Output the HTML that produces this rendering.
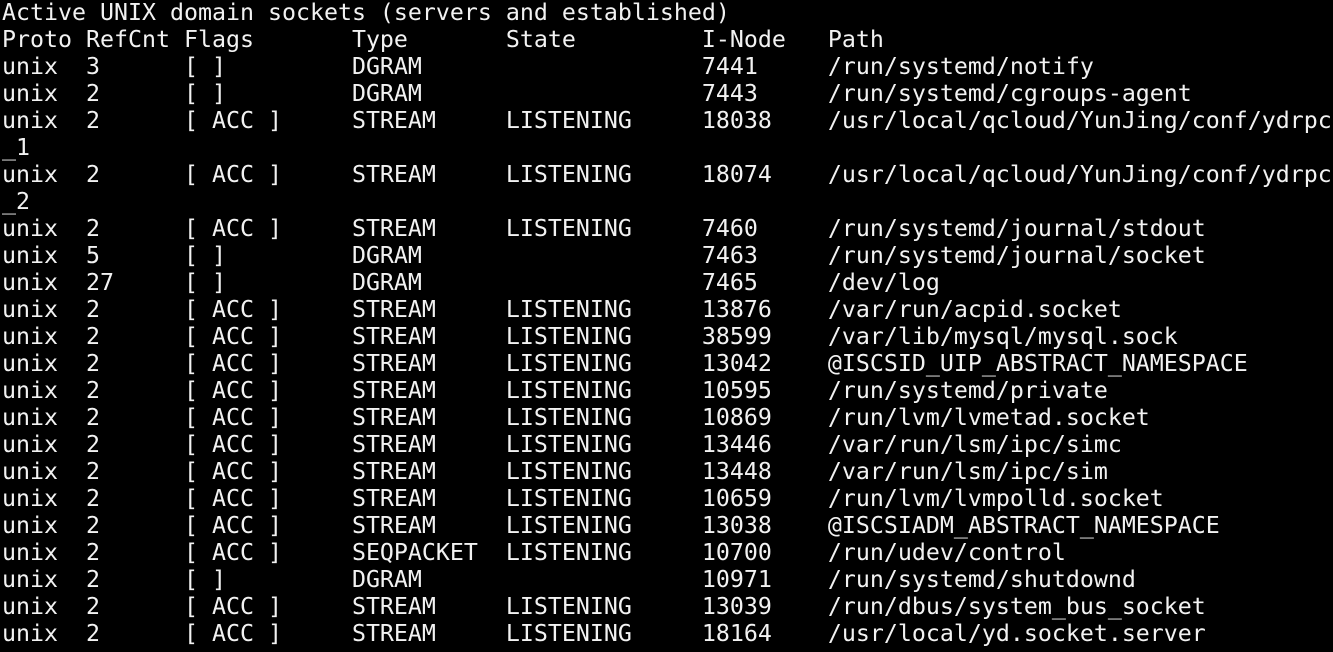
<!DOCTYPE html>
<html><head><meta charset="utf-8"><style>
html,body{margin:0;padding:0;background:#000;width:1333px;height:652px;overflow:hidden}
pre{margin:0;position:absolute;left:2px;top:-1px;font-family:"DejaVu Sans Mono","Liberation Mono",monospace;font-size:23.25px;line-height:27px;color:#f2f2f2;white-space:pre}
</style></head><body><pre>Active UNIX domain sockets (servers and established)
Proto RefCnt Flags       Type       State         I-Node   Path
unix  3      [ ]         DGRAM                    7441     /run/systemd/notify
unix  2      [ ]         DGRAM                    7443     /run/systemd/cgroups-agent
unix  2      [ ACC ]     STREAM     LISTENING     18038    /usr/local/qcloud/YunJing/conf/ydrpc
_1
unix  2      [ ACC ]     STREAM     LISTENING     18074    /usr/local/qcloud/YunJing/conf/ydrpc
_2
unix  2      [ ACC ]     STREAM     LISTENING     7460     /run/systemd/journal/stdout
unix  5      [ ]         DGRAM                    7463     /run/systemd/journal/socket
unix  27     [ ]         DGRAM                    7465     /dev/log
unix  2      [ ACC ]     STREAM     LISTENING     13876    /var/run/acpid.socket
unix  2      [ ACC ]     STREAM     LISTENING     38599    /var/lib/mysql/mysql.sock
unix  2      [ ACC ]     STREAM     LISTENING     13042    @ISCSID_UIP_ABSTRACT_NAMESPACE
unix  2      [ ACC ]     STREAM     LISTENING     10595    /run/systemd/private
unix  2      [ ACC ]     STREAM     LISTENING     10869    /run/lvm/lvmetad.socket
unix  2      [ ACC ]     STREAM     LISTENING     13446    /var/run/lsm/ipc/simc
unix  2      [ ACC ]     STREAM     LISTENING     13448    /var/run/lsm/ipc/sim
unix  2      [ ACC ]     STREAM     LISTENING     10659    /run/lvm/lvmpolld.socket
unix  2      [ ACC ]     STREAM     LISTENING     13038    @ISCSIADM_ABSTRACT_NAMESPACE
unix  2      [ ACC ]     SEQPACKET  LISTENING     10700    /run/udev/control
unix  2      [ ]         DGRAM                    10971    /run/systemd/shutdownd
unix  2      [ ACC ]     STREAM     LISTENING     13039    /run/dbus/system_bus_socket
unix  2      [ ACC ]     STREAM     LISTENING     18164    /usr/local/yd.socket.server</pre></body></html>
